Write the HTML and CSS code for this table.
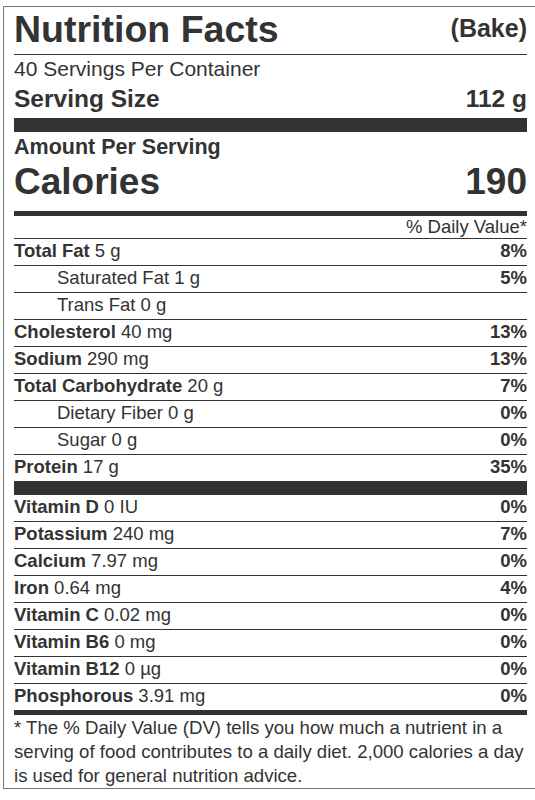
FILE: index.html
```html
<!DOCTYPE html>
<html>
<head>
    <meta charset="UTF-8">
    <title>Nutrition Facts</title>

    <link rel="stylesheet" href="styles.css">
</head>
<body>

    <section class="rotulo">
        <header class="cabecalho">
            <h1 class="titulo">Nutrition Facts</h1>
            <span class="variante">(Bake)</span>
        </header>

        <p class="porcoes">40 Servings Per Container</p>
        <div class="porcao">
            <span>Serving Size</span>
            <span>112 g</span>
        </div>

        <p class="quantidade">Amount Per Serving</p>
        <div class="calorias">
            <span>Calories</span>
            <span>190</span>
        </div>

        <p class="diario">% Daily Value*</p>

        <ul class="nutrientes">
            <li class="linha"><span><b>Total Fat</b> 5 g</span><b>8%</b>
            <li class="linha sub"><span>Saturated Fat 1 g</span><b>5%</b>
            <li class="linha sub"><span>Trans Fat 0 g</span>
            <li class="linha"><span><b>Cholesterol</b> 40 mg</span><b>13%</b>
            <li class="linha"><span><b>Sodium</b> 290 mg</span><b>13%</b>
            <li class="linha"><span><b>Total Carbohydrate</b> 20 g</span><b>7%</b>
            <li class="linha sub"><span>Dietary Fiber 0 g</span><b>0%</b>
            <li class="linha sub"><span>Sugar 0 g</span><b>0%</b>
            <li class="linha"><span><b>Protein</b> 17 g</span><b>35%</b>
        </ul>

        <ul class="nutrientes vitaminas">
            <li class="linha"><span><b>Vitamin D</b> 0 IU</span><b>0%</b>
            <li class="linha"><span><b>Potassium</b> 240 mg</span><b>7%</b>
            <li class="linha"><span><b>Calcium</b> 7.97 mg</span><b>0%</b>
            <li class="linha"><span><b>Iron</b> 0.64 mg</span><b>4%</b>
            <li class="linha"><span><b>Vitamin C</b> 0.02 mg</span><b>0%</b>
            <li class="linha"><span><b>Vitamin B6</b> 0 mg</span><b>0%</b>
            <li class="linha"><span><b>Vitamin B12</b> 0 µg</span><b>0%</b>
            <li class="linha"><span><b>Phosphorous</b> 3.91 mg</span><b>0%</b>
        </ul>

        <p class="rodape">* The % Daily Value (DV) tells you how much a nutrient in a serving of food contributes to a daily diet. 2,000 calories a day is used for general nutrition advice.</p>
    </section>

</body>
</html>
```

FILE: styles.css
```css
/* base */
*, *:after, *:before {
    box-sizing: border-box;
    margin: 0;
    padding: 0;
}

html {
    overflow: hidden;
    background: #fff;
}

body {
    color: #333;
    font-family: "Liberation Sans", Arial, sans-serif;
}

/* rotulo */
.rotulo {
    margin: 6px 0 0 3px;
    width: 535px;
    padding: 0 10px;
    border: 1px solid #777;
}

.cabecalho {
    display: flex;
    justify-content: space-between;
    align-items: center;
    padding: 2px 0 5px;
    border-bottom: 1px solid #333;
}
    .titulo {
        font-size: 37.5px;
        line-height: 40px;
        font-weight: bold;
    }

    .variante {
        font-size: 25px;
        line-height: 28px;
        font-weight: bold;
        margin-top: -2px;
    }

.porcoes {
    font-size: 21px;
    line-height: 24px;
    padding-top: 2px;
}

.porcao {
    display: flex;
    justify-content: space-between;
    font-size: 24.5px;
    line-height: 28px;
    font-weight: bold;
    padding: 4px 0 5px;
    border-bottom: 14px solid #333;
}

.quantidade {
    font-size: 21.5px;
    line-height: 24px;
    font-weight: bold;
    padding-top: 3px;
}

.calorias {
    display: flex;
    justify-content: space-between;
    font-size: 37px;
    line-height: 40px;
    font-weight: bold;
    padding: 3px 0 9px;
    border-bottom: 5px solid #333;
}

.diario {
    text-align: right;
    font-size: 18.5px;
    line-height: 22px;
    border-bottom: 1px solid #333;
}

/* nutrientes */
.nutrientes {
    list-style-type: none;
    border-bottom: 14px solid #333;
}

.nutrientes.vitaminas {
    border-bottom-width: 5px;
}

.linha {
    display: flex;
    justify-content: space-between;
    font-size: 18.5px;
    line-height: 24px;
    padding-bottom: 2px;
}
    .linha + .linha {
        border-top: 1px solid #333;
    }

    .linha.sub {
        padding-left: 43px;
    }

.rodape {
    font-size: 18.6px;
    line-height: 24px;
    padding-top: 1px;
}
```
